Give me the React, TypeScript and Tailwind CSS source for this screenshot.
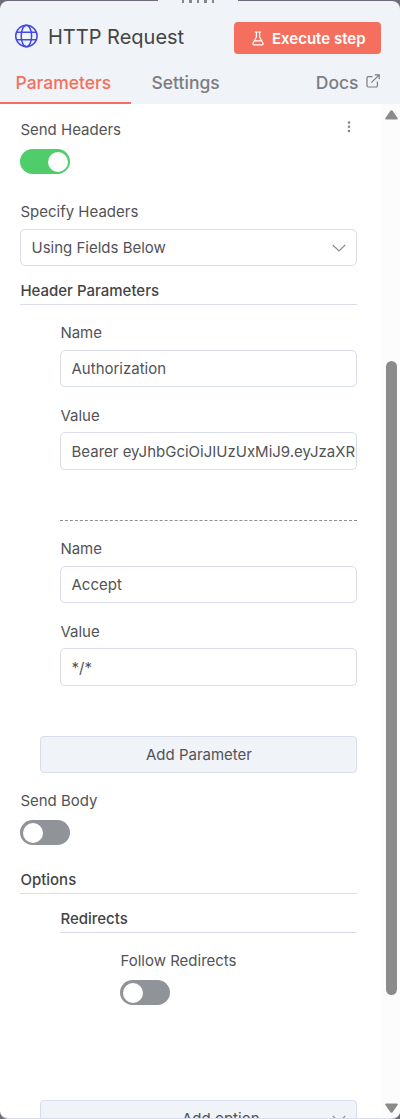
import type { ReactNode } from 'react';

interface FieldProps {
  label: string;
  value: string;
  height: string;
  labelClass?: string;
}

function GlobeIcon() {
  return (
    <svg className="w-6 h-6 shrink-0 text-[#4248e4] mb-[5px]" viewBox="0 0 24 24" fill="none" stroke="currentColor" strokeWidth="1.5">
      <circle cx="12.4" cy="12" r="10.7" />
      <ellipse cx="12.4" cy="12" rx="5.2" ry="10.7" />
      <path d="M2.4 8.2h20M2.4 15.8h20" />
    </svg>
  );
}

function FlaskIcon() {
  return (
    <svg className="w-3 h-[15px]" viewBox="0 0 12 15" fill="none" stroke="currentColor" strokeWidth="1.2" strokeLinecap="round" strokeLinejoin="round">
      <path d="M3.2 1h5.6M4.4 1v5L1 12.2Q.5 13.9 2.1 13.9h7.8q1.6 0 1.1-1.7L7.6 6V1M2.6 9.8h6.8" />
    </svg>
  );
}

function ExternalIcon() {
  return (
    <svg className="w-[14px] h-[14px] mb-1" viewBox="0 0 14 14" fill="none" stroke="currentColor" strokeWidth="1.2">
      <path d="M6.5 2.6H2.2A1.2 1.2 0 0 0 1 3.8v8A1.2 1.2 0 0 0 2.2 13h8a1.2 1.2 0 0 0 1.2-1.2V7.5" />
      <path d="M8.8.8h4.4v4.4M13.2.8 5.4 8.6" />
    </svg>
  );
}

function ChevronIcon() {
  return (
    <svg className="w-[14px] h-2 mb-0.5" viewBox="0 0 14 8" fill="none" stroke="#8c8c8c" strokeWidth="1.1">
      <path d="m.8 1 6.2 6 6.2-6" />
    </svg>
  );
}

function Toggle({ on = false }: { on?: boolean }) {
  return (
    <div className={`w-[50px] h-[25px] rounded-full flex items-center ${on ? 'bg-[#4fcd6a] justify-end pr-0.5' : 'bg-[#909397] pl-[3px]'}`}>
      <div className="w-5 h-5 rounded-full bg-white" />
    </div>
  );
}

function Label({ children }: { children: ReactNode }) {
  return <div className="h-5 leading-5 pl-[0.4px]">{children}</div>;
}

function SectionTitle({ children }: { children: ReactNode }) {
  return (
    <div className="h-[25px] pt-px leading-5 pl-[0.4px] font-medium text-[#444] border-b border-[#d9dceb]">{children}</div>
  );
}

function Field({ label, value, height, labelClass = 'mb-[7px]' }: FieldProps) {
  return (
    <div>
      <div className={labelClass}><Label>{label}</Label></div>
      <div className={`border border-[#d9dceb] rounded-[5px] pl-[10.5px] pt-0.5 flex items-center overflow-hidden whitespace-nowrap ${height}`}>
        {value}
      </div>
    </div>
  );
}

export default function App() {
  return (
    <div className="w-[400px] h-[1119px] bg-[#706c7b] font-['Inter',sans-serif] text-[15px] text-[#525356] overflow-hidden">
      <div className="relative h-full flex flex-col rounded-b-[8px] overflow-hidden border-b border-[#d9dceb]">
        {/* Drag handle */}
        <div className="absolute top-0 left-[158px] w-20 h-2 bg-[#f0f3f8] flex justify-center gap-[4.7px]">
          {[0, 1, 2, 3, 4].map((i) => (
            <span key={i} className="w-[2.8px] h-[3px] bg-[#85878c]" />
          ))}
        </div>

        {/* Header */}
        <header className="mt-px h-[103px] shrink-0 bg-[#f0f3f8] rounded-t-[8px] flex flex-col justify-between">
          <div className="flex items-center pl-[14px] pr-[19px] pt-[21px]">
            <GlobeIcon />
            <h1 className="ml-[10px] flex-1 text-[20px] leading-8 -mt-0.5 text-[#444]">HTTP Request</h1>
            <button className="w-[147px] h-8 rounded bg-[#f46f5e] text-white font-semibold text-[15px] flex items-center pl-[18px]">
              <FlaskIcon />
              <span className="ml-2 pt-0.5">Execute step</span>
            </button>
          </div>
          <nav className="flex font-medium text-[17.5px] leading-6 text-[#7b7d82]">
            <div className="w-[131px] h-[33px] pl-[15.5px] text-[#f46f5e] border-b-2 border-[#f46f5e]">Parameters</div>
            <div className="ml-5 pl-[0.5px]">Settings</div>
            <div className="ml-auto mr-5 h-6 flex items-center gap-[7.5px]">
              Docs
              <ExternalIcon />
            </div>
          </nav>
        </header>

        <div className="flex flex-1 min-h-0 bg-white">
          {/* Parameter list */}
          <main className="w-[382px] pl-5 pr-[25px] pt-4 overflow-hidden">
            <div className="flex justify-between">
              <Label>Send Headers</Label>
              <svg className="w-1 h-[13px] mr-1.5" viewBox="0 0 4 13" fill="#808287">
                <circle cx="2" cy="2.4" r="1.25" />
                <circle cx="2" cy="6.7" r="1.25" />
                <circle cx="2" cy="11" r="1.25" />
              </svg>
            </div>
            <div className="mt-[9px]"><Toggle on /></div>

            <div className="mt-7">
              <Label>Specify Headers</Label>
              <div className="mt-[7px] h-[37px] border border-[#d9dceb] rounded-[5px] pl-[10.5px] pr-[10px] pt-0.5 flex items-center justify-between">
                Using Fields Below
                <ChevronIcon />
              </div>
            </div>

            <div className="mt-[14px]"><SectionTitle>Header Parameters</SectionTitle></div>

            <div className="pl-10 pt-[18px]">
              <Field label="Name" value="Authorization" height="h-[37px]" />
              <div className="mt-[19px]">
                <Field label="Value" value="Bearer eyJhbGciOiJIUzUxMiJ9.eyJzaXR" height="h-[38px]" labelClass="mb-1.5" />
              </div>
              <div className="mt-[50px] mb-[18px] border-t border-dashed border-[#909090]" />
              <Field label="Name" value="Accept" height="h-[37px]" />
              <div className="mt-[19px]">
                <Field label="Value" value="*/*" height="h-[38px]" labelClass="mb-1.5" />
              </div>
            </div>

            <button className="block ml-5 mt-[50px] w-[317px] h-[37px] pt-0.5 pl-px rounded bg-[#f0f3f8] border border-[#d9dceb]">
              Add Parameter
            </button>

            <div className="mt-[18px]">
              <Label>Send Body</Label>
              <div className="mt-[9px]"><Toggle /></div>
            </div>

            <div className="mt-[24px]"><SectionTitle>Options</SectionTitle></div>
            <div className="pl-10 pt-[14px]">
              <SectionTitle>Redirects</SectionTitle>
              <div className="pl-[60px] pt-[18px]">
                <Label>Follow Redirects</Label>
                <div className="mt-[9px]"><Toggle /></div>
              </div>
            </div>

            <button className="ml-5 mt-[95px] w-[317px] h-[37px] pt-0.5 rounded bg-[#f0f3f8] border border-[#d9dceb] pl-[141px] pr-[10px] flex items-center justify-between">
              Add option
              <ChevronIcon />
            </button>
          </main>

          {/* Scrollbar */}
          <div className="w-[18px] bg-[#fcfcfc] flex flex-col items-center pl-[1px] pt-[6px] pb-[5px]">
            <svg className="w-[13px] h-[10px]" viewBox="0 0 13 10" fill="#8b8b8b">
              <path d="M5.4.7 .4 8q-.8 1.6 1 1.6h10.2q1.8 0 1-1.6L7.6.7q-1.1-1-2.2 0z" />
            </svg>
            <div className="mt-[241px] w-[11px] h-[634px] rounded-full bg-[#8b8b8b]" />
            <svg className="mt-auto w-[13px] h-[10px] rotate-180" viewBox="0 0 13 10" fill="#8b8b8b">
              <path d="M5.4.7 .4 8q-.8 1.6 1 1.6h10.2q1.8 0 1-1.6L7.6.7q-1.1-1-2.2 0z" />
            </svg>
          </div>
        </div>
      </div>
    </div>
  );
}
